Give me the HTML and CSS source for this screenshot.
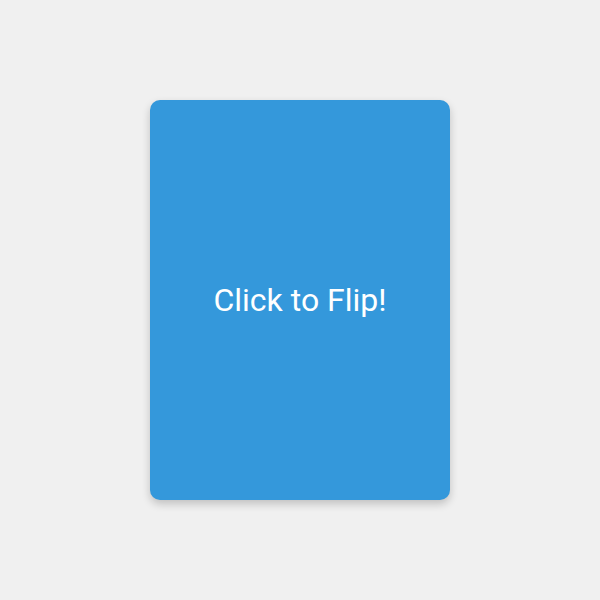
FILE: index.html
```html
<!DOCTYPE html>
<html>
<head>
<meta charset="utf-8">
<link rel="stylesheet" href="styles.css">
</head>
<body>
<div class="card">
  <div class="card-front">Click to Flip!</div>
</div>
</body>
</html>
```
FILE: styles.css
```css
html, body {
  margin: 0;
  padding: 0;
}
body {
  width: 600px;
  height: 600px;
  background: #f0f0f0;
  display: flex;
  align-items: center;
  justify-content: center;
  font-family: Roboto, "Liberation Sans", sans-serif;
}
.card {
  width: 300px;
  height: 400px;
  border-radius: 10px;
  background: #3498db;
  box-shadow: 0 4px 8px rgba(0, 0, 0, 0.2);
}
.card-front {
  height: 100%;
  display: flex;
  align-items: center;
  justify-content: center;
  color: #fff;
  font-size: 32px;
}
```
